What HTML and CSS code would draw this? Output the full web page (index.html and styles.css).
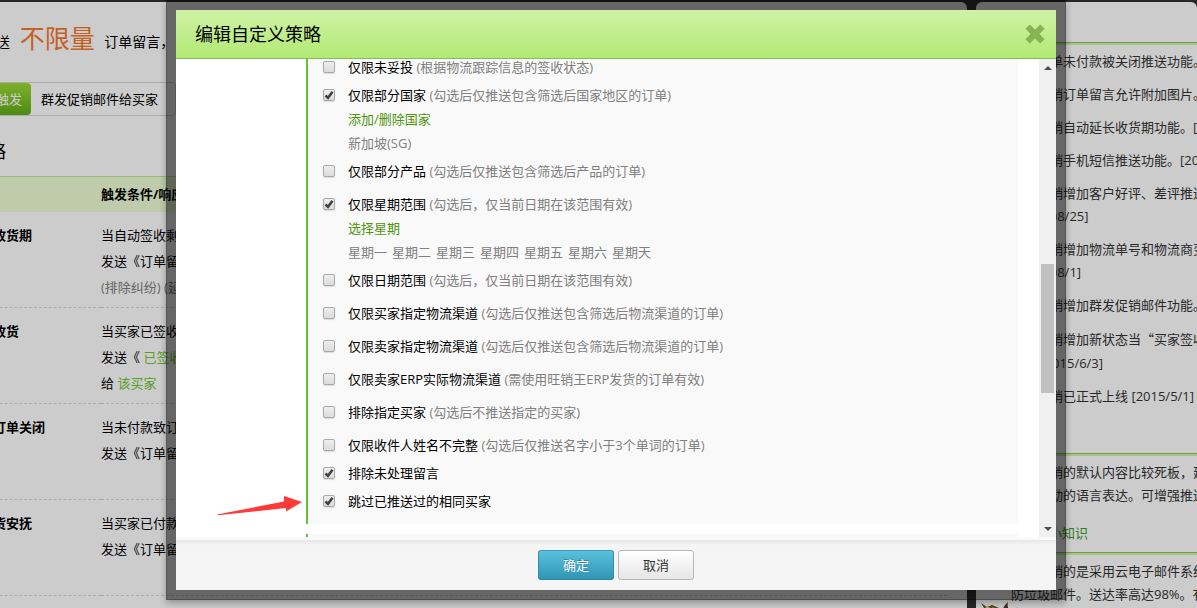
FILE: index.html
```html
<!DOCTYPE html>
<html lang="zh-CN">
<head>
<meta charset="utf-8">
<title>编辑自定义策略</title>
<link rel="stylesheet" href="styles.css">
</head>
<body>
<div class="page">
  <main class="panel main-panel">
    <p class="quota">送 <strong class="quota-value">不限量</strong> 订单留言，</p>
    <div class="tabs">
      <button class="tab tab-active" type="button">触发</button>
      <button class="tab" type="button">群发促销邮件给买家</button>
    </div>
    <h2 class="section-title">略</h2>
    <table class="rules">
      <thead><tr><th class="rule-name"></th><th>触发条件/响应动作</th></tr></thead>
      <tbody>
        <tr><th class="rule-name">收货期</th><td>当自动签收剩余<br>发送《订单留言》<br><span class="muted">(排除纠纷) (延长)</span></td></tr>
        <tr><th class="rule-name">收货</th><td>当买家已签收<br>发送《 <a href="#">已签收</a><br>给 <a href="#">该买家</a></td></tr>
        <tr><th class="rule-name">订单关闭</th><td>当未付款致订单<br>发送《订单留言》</td></tr>
        <tr><th class="rule-name">货安抚</th><td>当买家已付款<br>发送《订单留言》</td></tr>
      </tbody>
    </table>
  </main>
  <aside class="panel side-panel">
    <h3 class="side-title"></h3>
    <ul class="news">
      <li>订单未付款被关闭推送功能。</li>
      <li>旺销订单留言允许附加图片。</li>
      <li>旺销自动延长收货期功能。[2016]</li>
      <li>旺销手机短信推送功能。[2016]</li>
      <li>旺销增加客户好评、差评推送<br>[2015/08/25]</li>
      <li>旺销增加物流单号和物流商变量<br>[2015/08/1]</li>
      <li>旺销增加群发促销邮件功能。</li>
      <li>旺销增加新状态当<span class="quote">“</span>买家签收<br>货<span class="quote">”</span> [2015/6/3]</li>
      <li>旺销已正式上线 [2015/5/1]</li>
    </ul>
    <h3 class="side-title side-title-short"></h3>
    <p class="tip">旺销的默认内容比较死板，建议<br>用更生动的语言表达。可增强推送</p>
    <h3 class="side-title">旺销小知识</h3>
    <p class="tip">旺销的是采用云电子邮件系统<br>防垃圾邮件。送达率高达98%。有</p>
    <svg class="mascot" viewBox="0 0 48 12" width="48" height="12" aria-hidden="true">
      <path d="M5 1l6 4 5-2 7 3 2 6H12L8 6z" fill="#6b5320"/>
      <path d="M9 5l3 0 3 1-2 2zM16 5l5 2-2 2z" fill="#e8d78c"/>
      <path d="M24 10c3-1 3-6 8-10-1 4 0 8 4 12H26zM42 5l-5 7h3z" fill="#4a4026"/>
    </svg>
  </aside>
</div>

<div class="backdrop">
  <section class="modal" role="dialog" aria-labelledby="dialog-title">
    <header class="modal-header">
      <h1 class="modal-title" id="dialog-title">编辑自定义策略</h1>
      <button class="close" type="button" aria-label="关闭">
        <svg viewBox="0 0 20 20" width="20" height="20"><path d="M4.800 4.800L15.200 15.200M15.200 4.800L4.800 15.200" stroke="#87b352" stroke-width="6.200" stroke-linecap="square" stroke-linejoin="round"/></svg>
      </button>
    </header>
    <div class="modal-body">
      <div class="scroll-content">
        <ul class="options">
          <li><label><input type="checkbox"><span>仅限未妥投 <small>(根据物流跟踪信息的签收状态)</small></span></label></li>
          <li class="tight"><label><input type="checkbox" checked><span>仅限部分国家 <small>(勾选后仅推送包含筛选后国家地区的订单)</small></span></label>
            <div class="detail"><a href="#">添加/删除国家</a></div><div class="detail">新加坡(SG)</div></li>
          <li class="tight"><label><input type="checkbox"><span>仅限部分产品 <small>(勾选后仅推送包含筛选后产品的订单)</small></span></label></li>
          <li><label><input type="checkbox" checked><span>仅限星期范围 <small>(勾选后，仅当前日期在该范围有效)</small></span></label>
            <div class="detail"><a href="#">选择星期</a></div>
            <div class="detail weekdays"><span>星期一</span> <span>星期二</span> <span>星期三</span> <span>星期四</span> <span>星期五</span> <span>星期六</span> <span>星期天</span></div></li>
          <li class="tight"><label><input type="checkbox"><span>仅限日期范围 <small>(勾选后，仅当前日期在该范围有效)</small></span></label></li>
          <li><label><input type="checkbox"><span>仅限买家指定物流渠道 <small>(勾选后仅推送包含筛选后物流渠道的订单)</small></span></label></li>
          <li><label><input type="checkbox"><span>仅限卖家指定物流渠道 <small>(勾选后仅推送包含筛选后物流渠道的订单)</small></span></label></li>
          <li><label><input type="checkbox"><span>仅限卖家ERP实际物流渠道 <small>(需使用旺销王ERP发货的订单有效)</small></span></label></li>
          <li><label><input type="checkbox"><span>排除指定买家 <small>(勾选后不推送指定的买家)</small></span></label></li>
          <li><label><input type="checkbox"><span>仅限收件人姓名不完整 <small>(勾选后仅推送名字小于3个单词的订单)</small></span></label></li>
          <li class="tight"><label><input type="checkbox" checked><span>排除未处理留言</span></label></li>
          <li class="tight"><label><input type="checkbox" checked><span>跳过已推送过的相同买家</span></label></li>
        </ul>
        <div class="next-group"></div>
        <svg class="pointer" viewBox="0 0 86 22" width="86" height="22" aria-hidden="true"><path d="M0 19.500L67 6.500V1L85 7L69 16.500V13L1 20.200z" fill="#ff3838"/></svg>
      </div>
      <div class="scrollbar" aria-hidden="true">
        <div class="arrow arrow-up"></div>
        <div class="track-before"></div>
        <div class="thumb"></div>
        <div class="track-after"></div>
        <div class="arrow arrow-down"></div>
      </div>
    </div>
    <footer class="modal-footer">
      <button class="btn btn-primary" type="button">确定</button>
      <button class="btn" type="button">取消</button>
    </footer>
  </section>
</div>
</body>
</html>
```

FILE: styles.css
```css
* { box-sizing: border-box; }

body {
  margin: 0;
  height: 100vh;
  overflow: hidden;
  background: #323232;
  color: #000;
  font: 13px/26px "Open Sans", "Noto Sans CJK SC", sans-serif;
}

h1, h2, h3, p, ul { margin: 0; padding: 0; font-weight: normal; }
ul { list-style: none; }
a { color: #6dc82f; text-decoration: none; }
button { font: inherit; }

/* Page behind the dialog */
.page {
  display: grid;
  grid-template-columns: minmax(0, 1fr) 221px;
  gap: 9px;
  height: 100vh;
  margin-left: -20px;
  padding-top: 2px;
  overflow: hidden;
}

.panel { background: #fff; border-radius: 6px 6px 0 0; overflow: hidden; white-space: nowrap; }
.main-panel { padding-right: 20px; }

.quota { height: 80px; padding-left: 16px; font-size: 14px; line-height: 80px; }
.quota-value { margin: 0 6px; color: #f7782e; font-size: 25px; font-weight: normal; vertical-align: -1px; line-height: 30px; }

.tabs {
  display: flex;
  width: max-content;
  height: 34px;
  border: 1px solid #d8d8d8;
  border-radius: 4px;
}
.tab { padding: 0 17px 0 10px; border: 0; background: none; color: #000; }
.tab-active {
  padding: 0 9px 0 15px;
  border-radius: 4px;
  background: linear-gradient(#9edc36, #62ae18);
  color: #fff;
}

.section-title { height: 60px; padding-left: 8px; font-size: 18px; line-height: 70px; }

.rules { width: 100%; border-collapse: collapse; table-layout: fixed; text-align: left; }
.rules th, .rules td { padding: 10px 0 6px; vertical-align: top; }
.rules thead th { height: 35px; padding: 4px 0; border-top: 1px solid #c4e99b; background: #efffd6; }
.rules tbody tr { height: 96px; border-bottom: 1px dashed #d8d8d8; }
.rules .rule-name { width: 121px; padding-left: 13px; }
.muted { color: #808080; }

.side-panel { color: #333; line-height: 23px; }
.side-title {
  height: 41px;
  margin-bottom: 2px;
  padding-left: 47px;
  border-bottom: 1px solid #8fc556;
  box-shadow: 0 2px #d3f5ab;
  color: #3f9b2b;
  font-size: 13px;
  line-height: 42px;
}
.side-title-short { height: 36px; }
.news, .tip { padding: 5px 0 0 35px; }
.news li { margin-bottom: 10px; text-indent: 26px; }
.quote { font-family: "Noto Sans CJK SC", sans-serif; text-indent: 0; }
.tip { height: 56px; text-indent: 26px; }
.mascot { display: block; margin-top: -9px; }

/* Dialog */
.backdrop {
  position: fixed;
  inset: 0;
  padding: 0 131px 8px 166px;
  background: rgba(0, 0, 0, .2);
}
.modal {
  display: flex;
  flex-direction: column;
  height: 100%;
  border: 10px solid rgba(0, 0, 0, .5);
  background: #fff padding-box;
  box-shadow: 0 3px 7px rgba(0, 0, 0, .3);
}
.modal-header {
  display: flex;
  align-items: center;
  justify-content: space-between;
  height: 49px;
  padding: 0 11px 0 19px;
  border-bottom: 1px solid #88bd54;
  background: linear-gradient(#cff2a6, #b2e973);
}
.modal-title { font-size: 18px; }
.close { display: flex; padding: 0; border: 0; background: none; }

.modal-body { display: flex; flex: 1; min-height: 0; }
.scroll-content { position: relative; flex: 1; overflow: hidden; padding: 0 21px 0 130px; }
.options {
  margin-top: -4px;
  padding: 0 0 11px 15px;
  border-left: 2px solid #68c136;
  background: #f9f9f9;
  line-height: 24px;
}
.options li + li { margin-top: 9px; }
.options li.tight { margin-top: 4px; }
.options label { display: flex; align-items: center; gap: 13px; height: 24px; }
.options small { color: #808080; font-size: 13px; }
.options a { color: #4f950c; }
.detail { padding-left: 25px; color: #808080; }
.weekdays { display: flex; gap: 5px; }
.next-group { height: 20px; margin-top: 10px; border-left: 2px solid #68c136; background: #f9f9f9; }

input[type="checkbox"] {
  appearance: none;
  width: 12px;
  height: 12px;
  margin: 0;
  border: 1px solid #a9a9a9;
  border-radius: 2px;
  background: linear-gradient(#eee, #dcdcdc);
  box-shadow: 0 1px 1px rgba(0, 0, 0, .12);
}
input[type="checkbox"]:checked {
  background:
    url("data:image/svg+xml,%3Csvg xmlns='http://www.w3.org/2000/svg' viewBox='0 0 10 10'%3E%3Cpath d='M1.500 5.500L4 7.800L8.500 1.800' fill='none' stroke='%23404040' stroke-width='2.500'/%3E%3C/svg%3E"),
    linear-gradient(#eee, #dcdcdc);
}

.pointer { position: absolute; left: 41px; bottom: 20px; }

.scrollbar { display: flex; flex-direction: column; width: 17px; padding: 0 2px; background: #f0f0f0; }
.track-before { flex: 188; }
.thumb { flex: 129; background: #c1c1c1; }
.track-after { flex: 127; }
.arrow { display: flex; align-items: center; justify-content: center; height: 17px; }
.arrow::before { content: ""; border: 4px solid transparent; }
.arrow-up::before { border-top: 0; border-bottom-color: #505050; }
.arrow-down::before { border-bottom: 0; border-top-color: #505050; }

.modal-footer {
  display: flex;
  justify-content: center;
  gap: 4px;
  height: 53px;
  padding-top: 10px;
  border-top: 3px solid #fafafa;
  background: linear-gradient(#e6e6e6, #f5f5f5 5px);
  background-clip: padding-box;
}
.btn {
  width: 76px;
  height: 30px;
  padding: 0;
  border: 1px solid #b8b8b8;
  border-radius: 3px;
  background: linear-gradient(#fff, #e6e6e6);
  color: #333;
  line-height: 28px;
}
.btn-primary {
  border-color: #3a9cba #338fac #2a83a0;
  background: linear-gradient(#5bc0de, #2f96b4);
  color: #fff;
  text-shadow: 0 -1px 0 rgba(0, 0, 0, .25);
}
```
